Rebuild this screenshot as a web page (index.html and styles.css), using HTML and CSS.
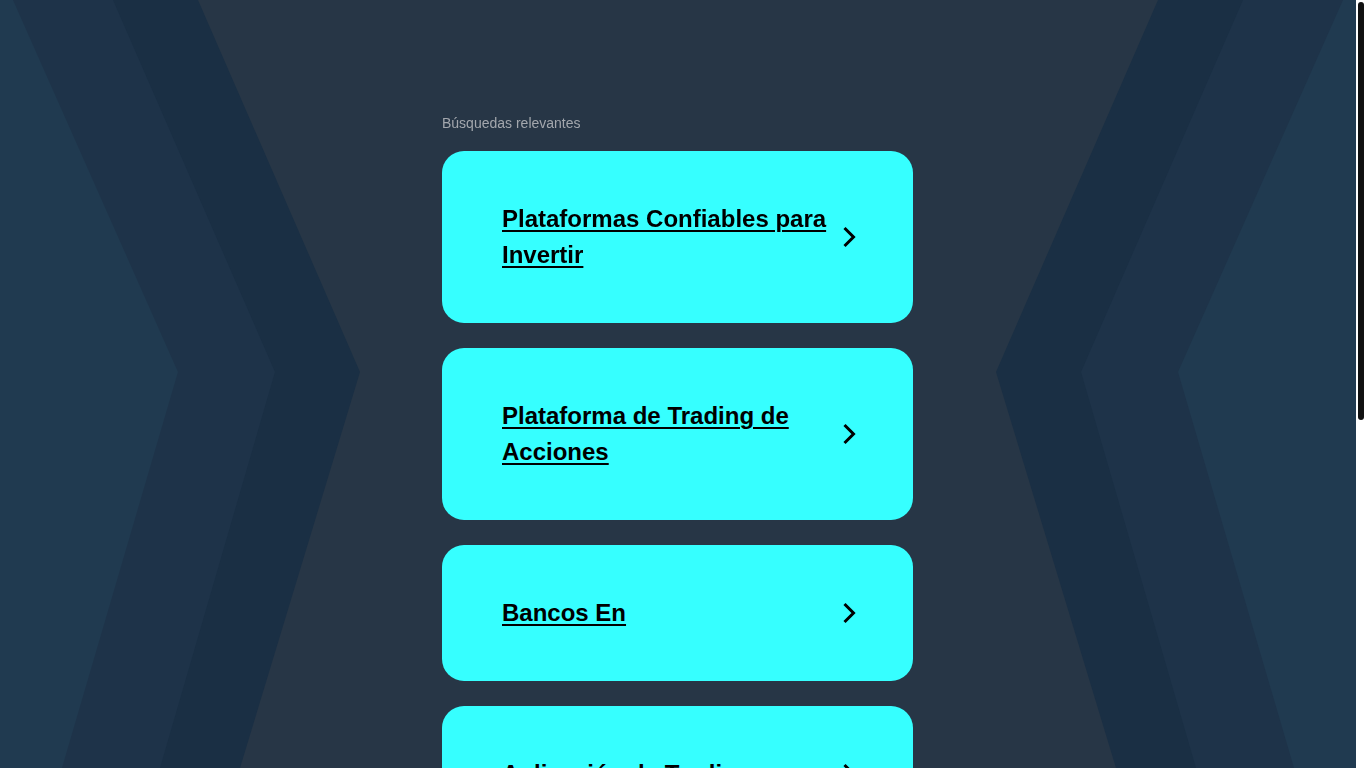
FILE: index.html
```html
<!DOCTYPE html>
<html lang="es">
<head>
<meta charset="utf-8">
<title>Búsquedas relevantes</title>
<link rel="stylesheet" href="styles.css">
</head>
<body>
<svg class="backdrop" viewBox="0 0 1356 768" preserveAspectRatio="none" aria-hidden="true">
  <polygon class="c-inner" points="0,0 198,0 360,372 240,768 0,768"/>
  <polygon class="c-mid" points="0,0 113,0 275,372 160,768 0,768"/>
  <polygon class="c-outer" points="0,0 13,0 178,372 62,768 0,768"/>
  <polygon class="c-inner" points="1356,0 1158,0 996,372 1116,768 1356,768"/>
  <polygon class="c-mid" points="1356,0 1243,0 1081,372 1196,768 1356,768"/>
  <polygon class="c-outer" points="1356,0 1343,0 1178,372 1294,768 1356,768"/>
</svg>
<div class="scrollbar" aria-hidden="true"><div class="scroll-thumb"></div></div>
<main class="page">
  <section class="searches">
    <p class="label">Búsquedas relevantes</p>
    <ul class="list">
      <li><a class="card" href="#"><span class="card-text">Plataformas Confiables para Invertir</span><svg class="arrow" viewBox="0 0 24 24"><polyline points="8.5,3 17.5,12 8.5,21"/></svg></a></li>
      <li><a class="card" href="#"><span class="card-text">Plataforma de Trading de Acciones</span><svg class="arrow" viewBox="0 0 24 24"><polyline points="8.5,3 17.5,12 8.5,21"/></svg></a></li>
      <li><a class="card" href="#"><span class="card-text">Bancos En</span><svg class="arrow" viewBox="0 0 24 24"><polyline points="8.5,3 17.5,12 8.5,21"/></svg></a></li>
      <li><a class="card" href="#"><span class="card-text">Aplicación de Trading</span><svg class="arrow" viewBox="0 0 24 24"><polyline points="8.5,3 17.5,12 8.5,21"/></svg></a></li>
      <li><a class="card" href="#"><span class="card-text">Inversiones en Bolsa</span><svg class="arrow" viewBox="0 0 24 24"><polyline points="8.5,3 17.5,12 8.5,21"/></svg></a></li>
    </ul>
  </section>
</main>
</body>
</html>
```

FILE: styles.css
```css
html {
  background: #273646;
}
body {
  margin: 0;
  font-family: "Liberation Sans", Arial, sans-serif;
  color: #000;
}
.backdrop {
  position: fixed;
  top: 0;
  left: 0;
  width: calc(100% - 10px);
  height: 100vh;
  z-index: -1;
  display: block;
}
.c-inner { fill: #1a2f44; }
.c-mid { fill: #1e3349; }
.c-outer { fill: #203a50; }

.scrollbar {
  position: fixed;
  top: 0;
  right: 0;
  width: 10px;
  height: 100vh;
  background: #ffffff;
  z-index: 10;
}
.scroll-thumb {
  margin: 2px 2px 0;
  height: 418px;
  background: #111111;
  border-radius: 3px;
}

.page {
  display: flex;
  justify-content: center;
  padding: 113px 11px 400px 0;
}
.searches {
  width: 471px;
}
.label {
  margin: 0 0 18px;
  font-size: 14px;
  line-height: 20px;
  color: #a3a7ad;
}
.list {
  list-style: none;
  margin: 0;
  padding: 0;
  display: flex;
  flex-direction: column;
  gap: 25px;
}
.card {
  display: flex;
  align-items: center;
  background: #36ffff;
  border-radius: 22px;
  padding: 50px 53px 50px 60px;
  color: #000;
  text-decoration: none;
}
.card-text {
  flex: 1;
  font-size: 24px;
  font-weight: 700;
  line-height: 36px;
  text-decoration: underline;
  text-decoration-thickness: 2px;
  text-underline-offset: 3px;
}
.arrow {
  width: 24px;
  height: 24px;
  flex: none;
  fill: none;
  stroke: #000;
  stroke-width: 3;
}
```
